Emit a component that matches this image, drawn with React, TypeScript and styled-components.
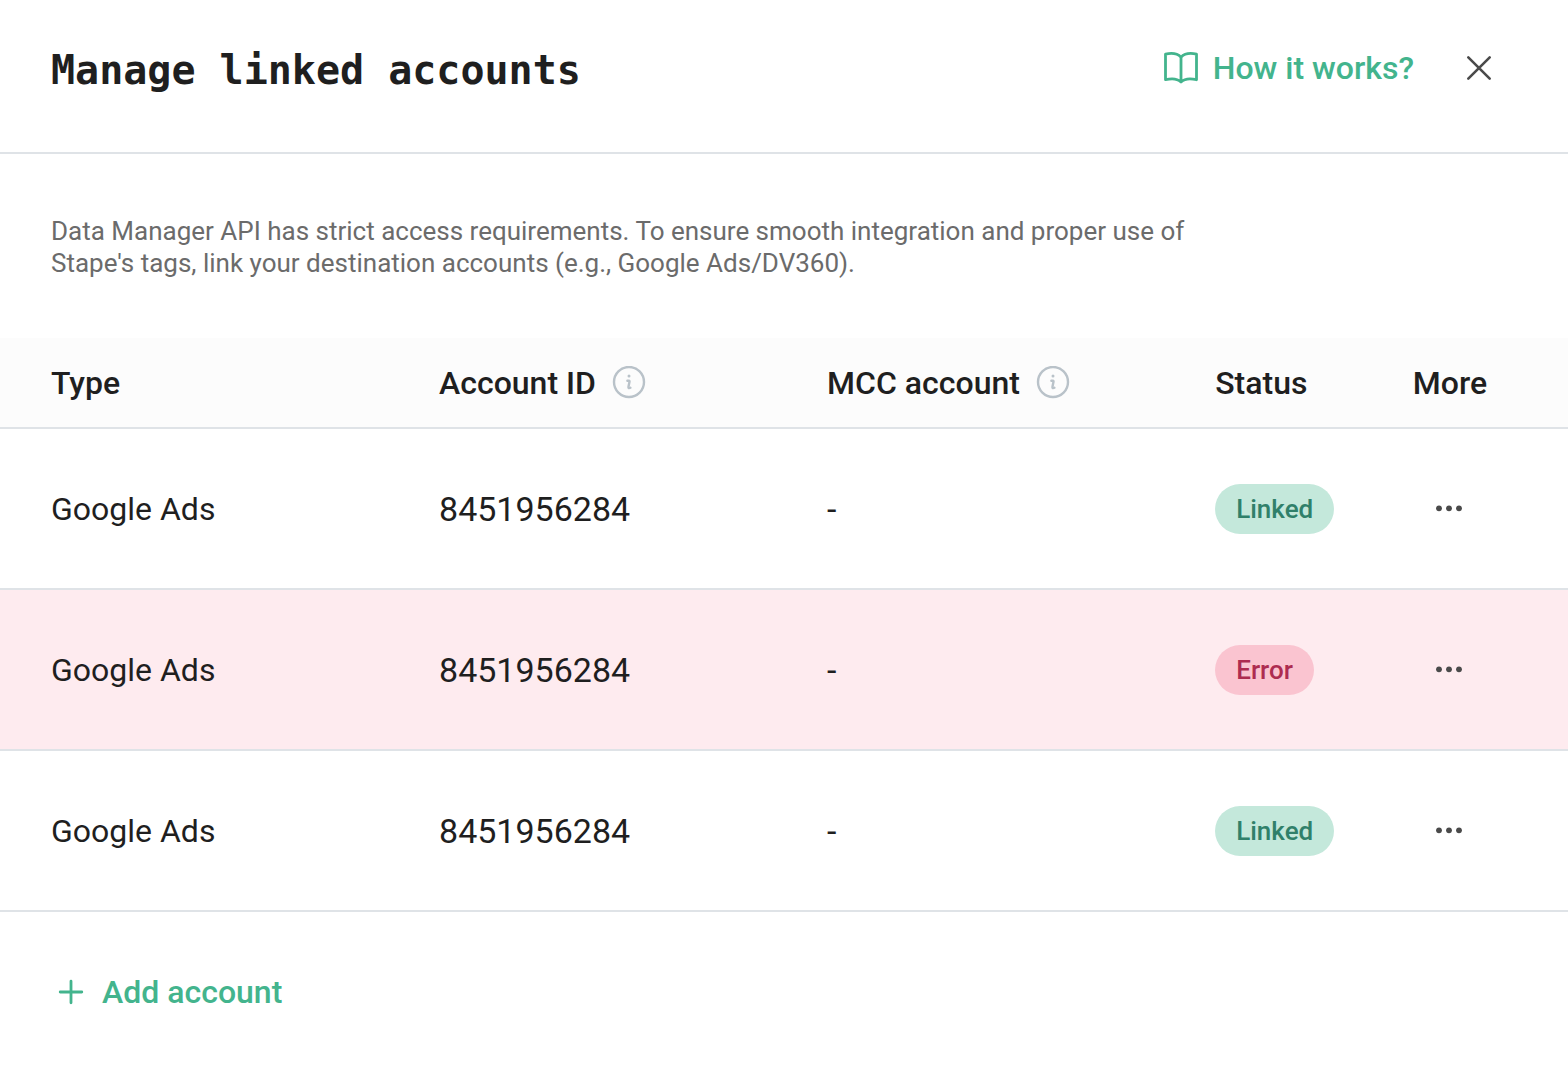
import React from 'react';
import styled, { createGlobalStyle } from 'styled-components';

const GlobalStyle = createGlobalStyle`
  *, *::before, *::after { box-sizing: border-box; }
  body {
    margin: 0;
    background: #ffffff;
    color: #1f1f1f;
    font-family: Roboto, "Liberation Sans", sans-serif;
    font-size: 32px;
    line-height: 40px;
  }
  button { font: inherit; color: inherit; border: 0; padding: 0; background: none; cursor: pointer; }
`;

const Panel = styled.main`
  width: 100%;
  padding-bottom: 52px;
`;

const Header = styled.header`
  display: flex;
  align-items: center;
  justify-content: space-between;
  padding: 42px 64px 58px 51px;
  border-bottom: 2px solid #dfe3e7;
`;

const Title = styled.h1`
  margin: 0;
  padding-top: 4px;
  font-family: "DejaVu Sans Mono", "Liberation Mono", monospace;
  font-size: 40px;
  font-weight: 700;
  line-height: 48px;
`;

const HeaderActions = styled.div`
  display: flex;
  align-items: center;
  gap: 40px;
`;

const HelpLink = styled.a`
  display: flex;
  align-items: center;
  gap: 14px;
  color: #43b48d;
  font-weight: 500;
  text-decoration: none;
`;

const IconButton = styled.button<{ $width: number }>`
  display: flex;
  align-items: center;
  justify-content: center;
  width: ${(p) => p.$width}px;
  height: 48px;
  color: #4a4a4a;
`;

const Intro = styled.p`
  margin: 0;
  max-width: 1240px;
  padding: 61px 0 59px 51px;
  color: #6b6b6b;
  font-size: 26px;
  line-height: 32px;
`;

const Table = styled.table`
  width: 100%;
  table-layout: fixed;
  border-collapse: separate;
  border-spacing: 0;
`;

const Col = styled.col<{ $width?: string }>`
  width: ${(p) => p.$width ?? 'auto'};
`;

const HeadCell = styled.th`
  height: 91px;
  padding: 0;
  background: #fcfcfc;
  border-bottom: 2px solid #dfe3e7;
  font-weight: 500;
  text-align: left;
  white-space: nowrap;
  &:first-child { padding-left: 51px; }
`;

const HeadLabel = styled.span`
  display: flex;
  align-items: center;
  gap: 16px;
`;

const Row = styled.tr<{ $error: boolean }>`
  background: ${(p) => (p.$error ? '#feebef' : '#ffffff')};
`;

const Cell = styled.td<{ $numeric?: boolean }>`
  height: 161px;
  padding: 0;
  border-bottom: 2px solid #dfe3e7;
  font-size: ${(p) => (p.$numeric ? 34 : 32)}px;
  &:first-child { padding-left: 51px; }
`;

const Badge = styled.span<{ $error: boolean }>`
  display: inline-block;
  padding: 0 21px;
  border-radius: 25px;
  background: ${(p) => (p.$error ? '#fac4d0' : '#c4e8db')};
  color: ${(p) => (p.$error ? '#ad2c50' : '#30806a')};
  font-size: 26px;
  font-weight: 500;
  line-height: 50px;
  vertical-align: middle;
`;

const AddButton = styled.button`
  display: flex;
  align-items: center;
  gap: 18px;
  margin: 60px 0 0 58px;
  color: #43b48d;
  font-weight: 500;
`;

const BookIcon = () => (
  <svg width="36" height="34" viewBox="0 0 36 34" fill="none" stroke="currentColor" strokeWidth="2.8" strokeLinejoin="round" aria-hidden="true">
    <path d="M18 6.2C14.5 2.6 8.5 1.8 2.5 3.2V28.7C8.5 27.2 14.5 27.6 18 31C21.5 27.6 27.5 27.2 33.5 28.7V3.2C27.5 1.8 21.5 2.6 18 6.2ZM18 6.2V31" />
  </svg>
);

const CloseIcon = () => (
  <svg width="26" height="26" viewBox="0 0 26 26" fill="none" stroke="currentColor" strokeWidth="2.6" strokeLinecap="round" aria-hidden="true">
    <path d="M2.3 2.3L23.7 23.7M23.7 2.3L2.3 23.7" />
  </svg>
);

const InfoIcon = () => (
  <svg width="34" height="34" viewBox="0 0 34 34" fill="none" stroke="#b9c2c9" strokeWidth="2.4" strokeLinecap="round" strokeLinejoin="round" aria-hidden="true">
    <circle cx="17" cy="16" r="15" />
    <circle cx="17" cy="10" r="1.5" fill="#b9c2c9" stroke="none" />
    <path d="M15.4 14.8H16.9C17.5 14.8 17.6 15.2 17.5 15.8L16.5 20.4C16.2 22 16.8 22.6 18.4 21.8" />
  </svg>
);

const DotsIcon = () => (
  <svg width="28" height="8" viewBox="0 0 28 8" fill="currentColor" aria-hidden="true">
    <circle cx="4" cy="3.3" r="2.9" />
    <circle cx="14" cy="3.3" r="2.9" />
    <circle cx="24" cy="3.3" r="2.9" />
  </svg>
);

const PlusIcon = () => (
  <svg width="26" height="26" viewBox="0 0 26 26" fill="none" stroke="currentColor" strokeWidth="2.8" strokeLinecap="round" aria-hidden="true">
    <path d="M13 2.2V23.8M2.2 13H23.8" />
  </svg>
);

type Account = { key: number; type: string; accountId: string; mcc: string; status: 'Linked' | 'Error' };

const accounts: Account[] = [
  { key: 1, type: 'Google Ads', accountId: '8451956284', mcc: '-', status: 'Linked' },
  { key: 2, type: 'Google Ads', accountId: '8451956284', mcc: '-', status: 'Error' },
  { key: 3, type: 'Google Ads', accountId: '8451956284', mcc: '-', status: 'Linked' },
];

export default function App() {
  return (
    <>
      <GlobalStyle />
      <Panel>
        <Header>
          <Title>Manage linked accounts</Title>
          <HeaderActions>
            <HelpLink href="#how-it-works">
              <BookIcon />
              How it works?
            </HelpLink>
            <IconButton type="button" $width={50} aria-label="Close">
              <CloseIcon />
            </IconButton>
          </HeaderActions>
        </Header>
        <Intro>
          Data Manager API has strict access requirements. To ensure smooth integration and proper use of
          <br />
          Stape's tags, link your destination accounts (e.g., Google Ads/DV360).
        </Intro>
        <Table>
          <colgroup>
            <Col $width="28%" />
            <Col $width="24.75%" />
            <Col $width="24.75%" />
            <Col $width="12.6%" />
            <Col />
          </colgroup>
          <thead>
            <tr>
              <HeadCell scope="col">Type</HeadCell>
              <HeadCell scope="col">
                <HeadLabel>Account ID <InfoIcon /></HeadLabel>
              </HeadCell>
              <HeadCell scope="col">
                <HeadLabel>MCC account <InfoIcon /></HeadLabel>
              </HeadCell>
              <HeadCell scope="col">Status</HeadCell>
              <HeadCell scope="col">More</HeadCell>
            </tr>
          </thead>
          <tbody>
            {accounts.map((account) => (
              <Row key={account.key} $error={account.status === 'Error'}>
                <Cell>{account.type}</Cell>
                <Cell $numeric>{account.accountId}</Cell>
                <Cell $numeric>{account.mcc}</Cell>
                <Cell>
                  <Badge $error={account.status === 'Error'}>{account.status}</Badge>
                </Cell>
                <Cell>
                  <IconButton type="button" $width={72} aria-label="More actions">
                    <DotsIcon />
                  </IconButton>
                </Cell>
              </Row>
            ))}
          </tbody>
        </Table>
        <AddButton type="button">
          <PlusIcon />
          Add account
        </AddButton>
      </Panel>
    </>
  );
}
